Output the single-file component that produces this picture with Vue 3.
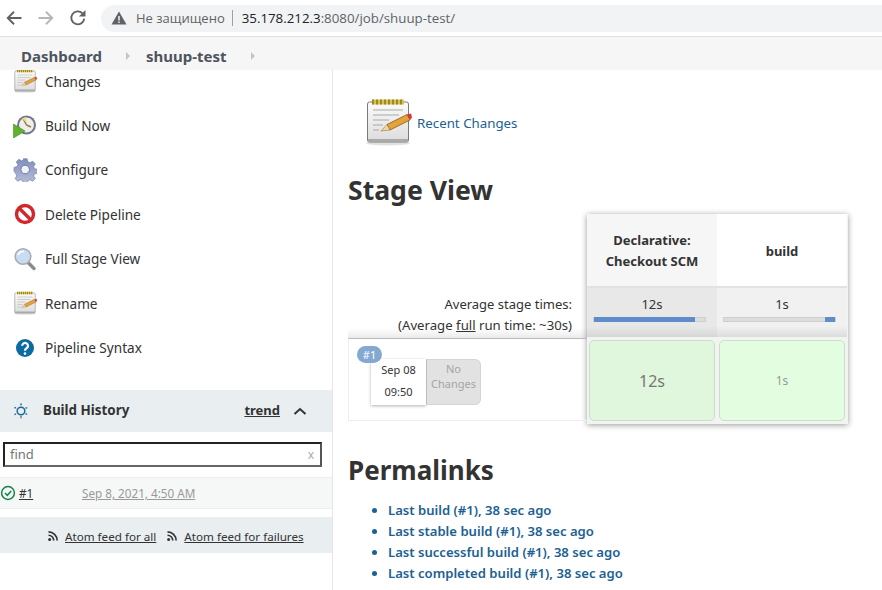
<template>
  <svg class="defs" aria-hidden="true">
    <defs>
      <linearGradient id="paper" x1="0" y1="0" x2="0" y2="1">
        <stop offset="0" stop-color="#fbfbfb" />
        <stop offset="1" stop-color="#dcdcdc" />
      </linearGradient>
      <linearGradient id="gearFill" x1="0" y1="0" x2="0" y2="1">
        <stop offset="0" stop-color="#7f8fbd" />
        <stop offset="1" stop-color="#b9bfd8" />
      </linearGradient>
      <symbol id="i-notepad" viewBox="0 0 48 48">
        <ellipse cx="24" cy="45" rx="22" ry="2.500" fill="#000" opacity=".12" />
        <rect x="3.500" y="4" width="41" height="40" rx="2" fill="url(#paper)" stroke="#7b7b7b" />
        <rect x="4" y="41" width="40" height="3" fill="#a9a9a9" />
        <rect x="8" y="1.500" width="32" height="5" fill="#d8c25a" />
        <path d="M9 1.500v5M13 1.500v5M17 1.500v5M21 1.500v5M25 1.500v5M29 1.500v5M33 1.500v5M37 1.500v5" stroke="#8f7a16" stroke-width="1.600" />
        <path d="M9 12h30M9 17h26M9 22h16M9 27h10M9 32h6" stroke="#a8a8a8" stroke-width="1" />
        <path d="M23 26.500 43 16.500l3 5.500-20 10z" fill="#e2a33c" stroke="#8a5a14" stroke-width=".8" />
        <path d="M17 33l6-6.500 3 5.500z" fill="#f0d9a8" stroke="#8a5a14" stroke-width=".5" />
        <path d="M43 16.500l4-1 1 4-2 2.500z" fill="#d9363a" />
      </symbol>
      <symbol id="i-build" viewBox="0 0 24 24">
        <circle cx="13.500" cy="11" r="9.500" fill="#77748f" />
        <circle cx="13.500" cy="11" r="7.500" fill="#efeee8" />
        <path d="M13.500 11 10 4.500M13.500 11 18 13" stroke="#8a8050" stroke-width="1.500" />
        <path d="M9 4.500l4-1.500 1 6z" fill="#f1dc82" />
        <path d="M.5 10 12 17 .5 24z" fill="#5fb32c" stroke="#3e8f1e" stroke-width=".6" />
      </symbol>
      <symbol id="i-gear" viewBox="0 0 24 24">
        <path d="M10 1h4l.8 3.200 2.200 1 2.900-1.600 2.700 2.800-1.700 2.800.9 2.200 3.200.8v3.900l-3.200.8-.9 2.200 1.700 2.800-2.700 2.800-2.900-1.700-2.200 1-.8 3.200h-4l-.8-3.200-2.200-1-2.900 1.700-2.700-2.800 1.700-2.800-.9-2.200L.2 14v-3.900l3.200-.8.900-2.200L2.600 4.300l2.700-2.700 2.900 1.600 2-1z" fill="url(#gearFill)" stroke="#6c7aa6" stroke-width=".7" transform="translate(.8 -.2) scale(.95)" />
        <circle cx="12.200" cy="11.500" r="4.300" fill="#f1f2f8" stroke="#6c7aa6" />
      </symbol>
      <symbol id="i-delete" viewBox="0 0 24 24">
        <circle cx="12" cy="12" r="8.500" fill="#fff" stroke="#d3272b" stroke-width="3.400" />
        <path d="M6 6 18 18" stroke="#d3272b" stroke-width="3.400" />
      </symbol>
      <symbol id="i-search" viewBox="0 0 24 24">
        <path d="M14.500 15 21 21.500" stroke="#8b8b8b" stroke-width="3.400" stroke-linecap="round" />
        <circle cx="10" cy="9.500" r="7.800" fill="#c8dcf2" stroke="#a9adb3" stroke-width="1.600" />
        <path d="M5 8a5.500 5 0 0 1 6-3.500" fill="none" stroke="#fff" stroke-width="1.600" />
      </symbol>
      <symbol id="i-help" viewBox="0 0 24 24">
        <circle cx="12" cy="12" r="9" fill="#0d6aa0" />
        <path d="M9.200 9.800a2.900 2.800 0 1 1 4.700 2.200c-1.200.9-1.900 1.300-1.900 2.700" fill="none" stroke="#fff" stroke-width="2.200" />
        <circle cx="12" cy="17.600" r="1.300" fill="#fff" />
      </symbol>
      <symbol id="i-rss" viewBox="0 0 16 16">
        <circle cx="3.500" cy="12.500" r="2" fill="#333" />
        <path d="M2 7a7 7 0 0 1 7 7M2 2.500A11.500 11.500 0 0 1 13.500 14" fill="none" stroke="#333" stroke-width="2.200" />
      </symbol>
    </defs>
  </svg>

  <div class="page">
    <header class="chrome">
      <svg class="nav" viewBox="0 0 16 16"><path d="M14 8H3M8 3 3 8l5 5" fill="none" stroke="#5f6368" stroke-width="1.500" /></svg>
      <svg class="nav" viewBox="0 0 16 16"><path d="M2 8h11M8 3l5 5-5 5" fill="none" stroke="#b4b6b9" stroke-width="1.500" /></svg>
      <svg class="nav reload" viewBox="0 0 16 16"><path d="M13 8.500A5.200 5.200 0 1 1 11.600 4.300" fill="none" stroke="#5f6368" stroke-width="1.500" /><path d="M14 1.500v5.300H8.700z" fill="#5f6368" /></svg>
      <div class="omnibox">
        <svg class="warn" viewBox="0 0 16 16"><path d="M8 1.500 15.500 14.500H.5z" fill="#5f6368" /><path d="M8 6v4.500M8 11.500v1.500" stroke="#f1f3f4" stroke-width="1.500" /></svg>
        <span class="insecure">Не защищено</span>
        <span class="sep"></span>
        <span class="url"><b>35.178.212.3</b>:8080/job/shuup-test/</span>
      </div>
    </header>

    <nav class="crumbs">
      <span class="crumb">Dashboard</span>
      <span class="tri"></span>
      <span class="crumb">shuup-test</span>
      <span class="tri"></span>
    </nav>

    <div class="body">
      <aside class="side">
        <ul class="tasks">
          <li v-for="t in tasks" :key="t.label" class="task">
            <svg class="task-icon"><use :href="'#' + t.icon" /></svg>
            <span>{{ t.label }}</span>
          </li>
        </ul>

        <section class="history">
          <div class="history-head">
            <svg class="sun" viewBox="0 0 16 16">
              <circle cx="8" cy="8" r="3.800" fill="none" stroke="#19689c" stroke-width="1.500" />
              <path d="M8 .5v2.200M8 13.300v2.200M1.500 4.300l1.900 1.100M12.600 10.600l1.900 1.100M1.500 11.700l1.900-1.100M12.600 5.400l1.900-1.100" stroke="#19689c" stroke-width="1.500" stroke-dasharray="1.500 .5" />
            </svg>
            <span class="history-title">Build History</span>
            <a class="trend">trend</a>
            <svg class="chev" viewBox="0 0 14 10"><path d="M1.500 8l5.500-5 5.500 5" fill="none" stroke="#333" stroke-width="2" /></svg>
          </div>
          <div class="find">
            <span>find</span>
            <span class="find-x">x</span>
          </div>
          <div class="build-row">
            <svg class="ok" viewBox="0 0 16 16">
              <circle cx="8" cy="8" r="6.400" fill="none" stroke="#138347" stroke-width="1.500" />
              <path d="M5 8l2.300 2.300L11.200 6" fill="none" stroke="#138347" stroke-width="1.500" />
            </svg>
            <a class="build-num">#1</a>
            <a class="build-date">Sep 8, 2021, 4:50 AM</a>
          </div>
          <div class="feeds">
            <svg class="rss"><use href="#i-rss" /></svg>
            <a>Atom feed for all</a>
            <svg class="rss second"><use href="#i-rss" /></svg>
            <a>Atom feed for failures</a>
          </div>
        </section>
      </aside>

      <main class="main">
        <div class="recent">
          <svg class="recent-icon"><use href="#i-notepad" /></svg>
          <a>Recent Changes</a>
        </div>

        <h1 class="stage-title">Stage View</h1>

        <div class="stage">
          <div class="stage-left">
            <div class="averages">
              <div>Average stage times:</div>
              <div class="full-line">(Average <u>full</u> run time: ~30s)</div>
            </div>
            <div class="run">
              <span class="bubble">#1</span>
              <div class="date-card">
                <div>Sep 08</div>
                <div>09:50</div>
              </div>
              <div class="no-changes">No<br />Changes</div>
            </div>
          </div>

          <div class="stage-card">
            <div class="stage-head shaded">Declarative:<br />Checkout SCM</div>
            <div class="stage-head">build</div>
            <div v-for="a in averages" :key="a.time" class="avg" :class="{ dark: a.dark }">
              <div>{{ a.time }}</div>
              <div class="bar" :class="{ end: a.end }">
                <div class="bar-fill" :style="{ width: a.pct + '%' }"></div>
              </div>
            </div>
            <div class="cell big"><span>12s</span></div>
            <div class="cell small"><span>1s</span></div>
          </div>
        </div>

        <h1 class="perma-title">Permalinks</h1>
        <ul class="perma">
          <li v-for="p in permalinks" :key="p">{{ p }}</li>
        </ul>
      </main>
    </div>
  </div>
</template>

<script setup>
const tasks = [
  { label: 'Changes', icon: 'i-notepad' },
  { label: 'Build Now', icon: 'i-build' },
  { label: 'Configure', icon: 'i-gear' },
  { label: 'Delete Pipeline', icon: 'i-delete' },
  { label: 'Full Stage View', icon: 'i-search' },
  { label: 'Rename', icon: 'i-notepad' },
  { label: 'Pipeline Syntax', icon: 'i-help' },
]

const averages = [
  { time: '12s', pct: 91, end: false, dark: true },
  { time: '1s', pct: 9, end: true, dark: false },
]

const permalinks = [
  'Last build (#1), 38 sec ago',
  'Last stable build (#1), 38 sec ago',
  'Last successful build (#1), 38 sec ago',
  'Last completed build (#1), 38 sec ago',
]
</script>

<style>
html, body {
  margin: 0;
  background: #fff;
  overflow: hidden;
}
</style>

<style scoped>
.defs {
  position: absolute;
  width: 0;
  height: 0;
}

.page {
  width: 882px;
  height: 590px;
  overflow: hidden;
  display: flex;
  flex-direction: column;
  font-family: "Noto Sans", sans-serif;
  font-size: 13px;
  color: #333;
}

.chrome {
  height: 36px;
  flex: none;
  display: flex;
  align-items: center;
  background: #fff;
  border-bottom: 1px solid #dfe1e5;
  padding-left: 4px;
}

.nav {
  width: 20px;
  height: 20px;
  margin-right: 12px;
}

.nav.reload {
  margin-right: 13px;
}

.omnibox {
  flex: 1;
  height: 27px;
  margin-right: -30px;
  border-radius: 14px;
  background: #f1f3f4;
  display: flex;
  align-items: center;
  padding-left: 10px;
  font-family: "Open Sans", sans-serif;
  font-size: 13px;
}

.warn {
  width: 16px;
  height: 16px;
  margin-right: 9px;
}

.insecure {
  color: #5f6368;
}

.sep {
  width: 1px;
  height: 16px;
  background: #9aa0a6;
  margin: 0 9px 0 7px;
}

.url {
  color: #5f6368;
  font-size: 13.3px;
}

.url b {
  font-weight: 400;
  color: #202124;
}

.crumbs {
  height: 33px;
  flex: none;
  box-sizing: border-box;
  display: flex;
  align-items: center;
  background: #f6f6f7;
  padding: 4px 0 0 21px;
}

.crumb {
  font-size: 15px;
  font-weight: 700;
  color: #4d545d;
}

.tri {
  width: 0;
  height: 0;
  border-left: 4px solid #c3c4c6;
  border-top: 4px solid transparent;
  border-bottom: 4px solid transparent;
  margin: 0 16px 0 24px;
}

.body {
  flex: 1;
  display: flex;
  min-height: 0;
}

.side {
  width: 332px;
  flex: none;
  overflow: hidden;
  border-right: 1px solid #e6e6e6;
}

.tasks {
  list-style: none;
  margin: -11px 0 0;
  padding: 0;
}

.task {
  height: 44.4px;
  display: flex;
  align-items: center;
  padding-left: 13px;
  color: #333;
  font-size: 13.6px;
}

.task-icon {
  width: 24px;
  height: 24px;
  margin-right: 8px;
}

.history {
  margin-top: 20px;
}

.history-head {
  height: 42px;
  display: flex;
  align-items: center;
  background: #e9eef1;
  padding-left: 13px;
  font-size: 13.4px;
}

.sun {
  width: 16px;
  height: 16px;
  margin-right: 14px;
}

.history-title {
  font-weight: 700;
  flex: 1;
  margin-top: -1px;
}

.trend {
  font-weight: 700;
  text-decoration: underline;
  margin: -1px 13px 0 0;
  font-size: 13px;
}

.chev {
  width: 14px;
  height: 10px;
  margin-right: 25px;
}

.find {
  height: 25px;
  box-sizing: border-box;
  margin: 10px 10px 10px 3px;
  border: 2px solid #222;
  border-right-color: #555;
  border-bottom-color: #666;
  display: flex;
  align-items: center;
  justify-content: space-between;
  padding: 0 6px 0 5px;
  color: #757575;
  font-size: 13px;
}

.find-x {
  color: #aaa;
  font-size: 12px;
}

.build-row {
  height: 32px;
  display: flex;
  align-items: center;
  background: #f6f7f7;
  border-top: 1px solid #eee;
  border-bottom: 1px solid #eee;
  box-sizing: border-box;
  font-size: 11.7px;
}

.ok {
  width: 16px;
  height: 16px;
  margin-right: 3px;
}

.build-num {
  text-decoration: underline;
  width: 63px;
}

.build-date {
  color: #999;
  text-decoration: underline;
}

.feeds {
  height: 36px;
  box-sizing: border-box;
  margin-top: 8px;
  display: flex;
  align-items: center;
  background: #e9eef1;
  padding: 3px 0 0 47px;
  font-size: 11.65px;
}

.feeds a {
  text-decoration: underline;
}

.rss {
  width: 12px;
  height: 12px;
  margin-right: 6px;
}

.rss.second {
  margin-left: 10px;
}

.main {
  flex: 1;
  min-width: 0;
  padding-left: 15px;
}

.recent {
  display: flex;
  align-items: center;
  margin: 28px 0 0 16px;
  height: 48px;
  color: #1b6193;
  font-size: 13.3px;
}

.recent a {
  padding-top: 2px;
}

.recent-icon {
  width: 48px;
  height: 48px;
  margin-right: 5px;
}

.stage-title {
  font-size: 26.6px;
  line-height: 36px;
  font-weight: 700;
  margin: 26px 0 6px;
  color: #333;
}

.stage {
  display: flex;
}

.stage-left {
  width: 239px;
  flex: none;
}

.averages {
  height: 124px;
  box-sizing: border-box;
  padding: 80px 15px 0 0;
  text-align: right;
  line-height: 21px;
  background: linear-gradient(to bottom, #fff 114px, #ebebeb);
}

.full-line {
  font-size: 13.2px;
}

.run {
  position: relative;
  height: 83px;
  box-sizing: border-box;
  display: flex;
  padding: 20px 0 0 22px;
  border: 1px solid #eee;
  border-top: 1px solid #bbb;
  border-right: 0;
}

.bubble {
  position: absolute;
  left: 8px;
  top: 7px;
  width: 25px;
  height: 17px;
  border-radius: 9px;
  background: #84a9d1;
  color: #fff;
  font-size: 11px;
  line-height: 17px;
  text-align: center;
}

.date-card {
  width: 55px;
  height: 46px;
  background: #fff;
  box-shadow: 0 1px 3px rgba(0, 0, 0, 0.3);
  text-align: center;
  font-size: 11px;
  line-height: 22px;
}

.no-changes {
  width: 55px;
  height: 46px;
  box-sizing: border-box;
  background: #e2e2e2;
  border: 1px solid #d4d4d4;
  border-left: 1px solid #bbb;
  border-radius: 0 6px 6px 0;
  color: #a5a5a5;
  font-size: 11px;
  line-height: 15px;
  text-align: center;
  padding-top: 1px;
}

.stage-card {
  display: grid;
  grid-template-columns: 130px 130px;
  grid-template-rows: 72px 51px 87px;
  width: 261px;
  box-shadow: 0 1px 6px rgba(0, 0, 0, 0.4);
  background: #f0f5f0;
}

.stage-head {
  display: flex;
  align-items: center;
  justify-content: center;
  text-align: center;
  font-weight: 700;
  line-height: 21px;
  padding-top: 2px;
  background: #fff;
}

.stage-head.shaded {
  background: #f6f6f6;
}

.avg {
  background: linear-gradient(to bottom, #f1f1f1 38px, #dcdcdc);
  border-top: 2px solid #e2e2e2;
  box-sizing: border-box;
  text-align: center;
  padding-top: 7px;
  line-height: 19px;
}

.avg.dark {
  background: linear-gradient(to bottom, #e8e8e8 38px, #d6d6d6);
}

.bar {
  display: flex;
  height: 5px;
  margin: 3px 11px 0 6px;
  background: #dcdcdc;
  border: 1px solid #cfcfcf;
  box-sizing: border-box;
}

.bar.end {
  justify-content: flex-end;
}

.bar-fill {
  background: #5f8dcc;
  height: 5px;
  margin-top: -1px;
}

.cell {
  margin: 3px 2px;
  border: 1px solid #cddccd;
  border-radius: 5px;
  display: flex;
  align-items: center;
  justify-content: center;
}

.cell.big {
  background: #e0f7de;
  font-size: 16px;
  color: #777;
}

.cell.small {
  background: #e3fde1;
  font-size: 12px;
  color: #999;
}

.perma-title {
  font-size: 26px;
  line-height: 36px;
  font-weight: 700;
  margin: 28px 0 0;
  color: #333;
}

.perma {
  margin: 12px 0 0;
  padding-left: 40px;
  color: #1b6193;
  font-weight: 600;
  font-size: 13.1px;
  line-height: 21px;
}
</style>
